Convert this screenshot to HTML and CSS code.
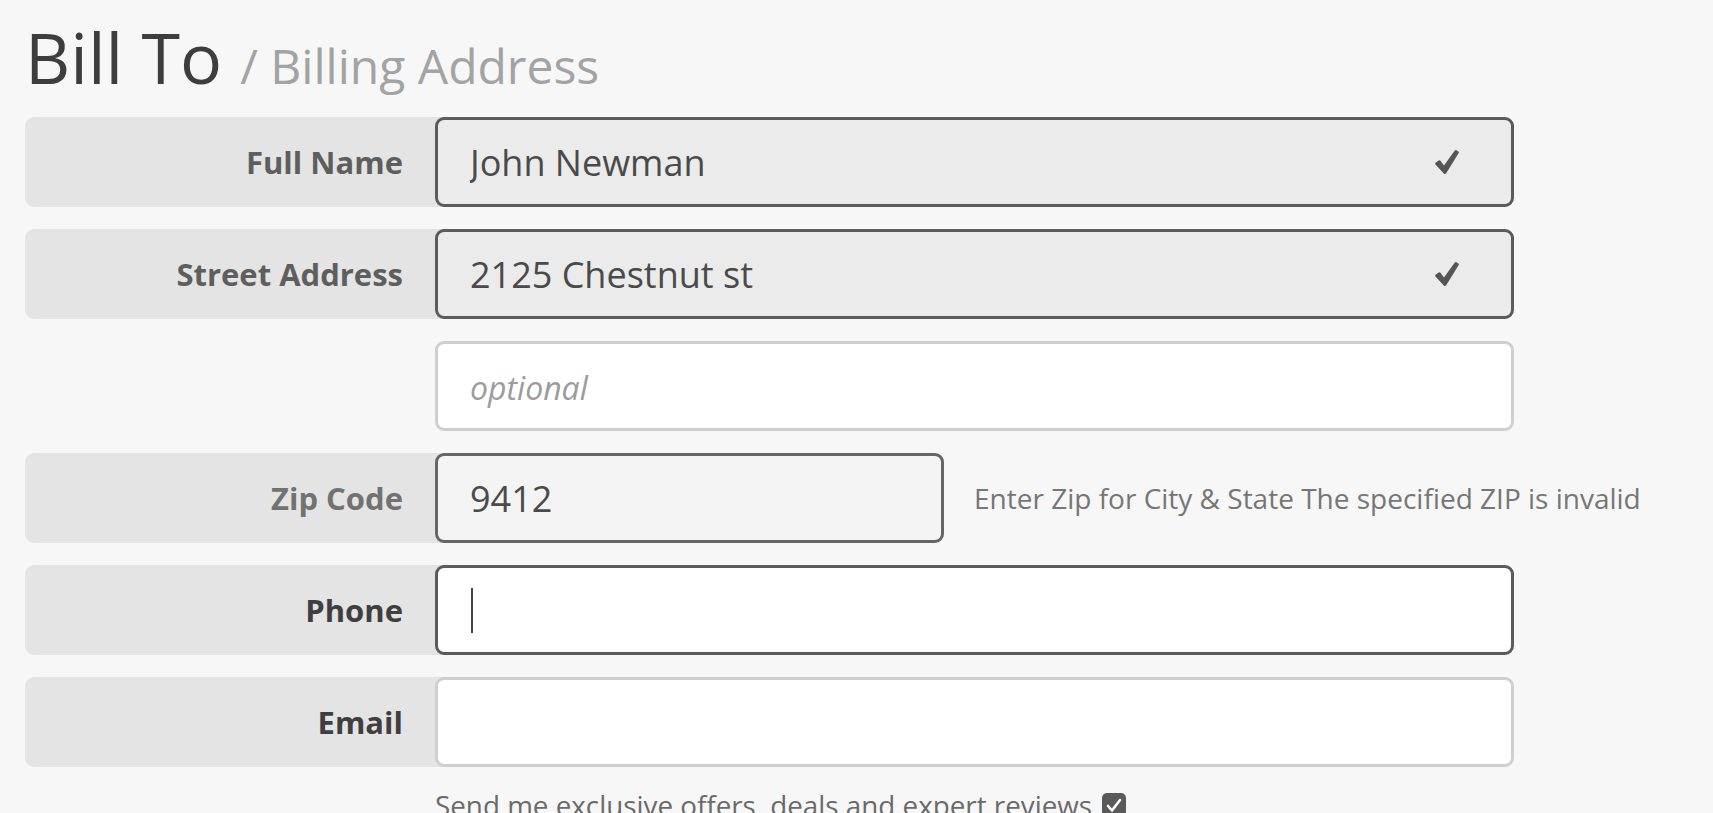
FILE: index.html
```html
<!DOCTYPE html>
<html lang="en">
<head>
<meta charset="utf-8">
<title>Bill To / Billing Address</title>
<link rel="stylesheet" href="styles.css">
</head>
<body>
<main class="page">
  <h1 class="title">Bill To <span class="subtitle">/ Billing Address</span></h1>
  <form class="form">
    <div class="row">
      <label class="label label-done">Full Name</label>
      <div class="field field-done">
        <input class="input" type="text" value="John Newman">
        <svg class="check" viewBox="0 0 28 28" aria-hidden="true"><path d="M2.2 16.2 Q2 15.2 2.8 14.6 L5.6 12.4 Q6.5 11.8 7.2 12.6 L11 17.6 L21.8 2.6 Q22.6 1.6 23.6 2.2 L25.4 3.4 Q26.2 4 25.7 4.9 L13.2 25.2 Q12.2 26.6 10.8 25.4 Z" fill="#555"/></svg>
      </div>
    </div>
    <div class="row">
      <label class="label label-done">Street Address</label>
      <div class="field field-done">
        <input class="input" type="text" value="2125 Chestnut st">
        <svg class="check" viewBox="0 0 28 28" aria-hidden="true"><path d="M2.2 16.2 Q2 15.2 2.8 14.6 L5.6 12.4 Q6.5 11.8 7.2 12.6 L11 17.6 L21.8 2.6 Q22.6 1.6 23.6 2.2 L25.4 3.4 Q26.2 4 25.7 4.9 L13.2 25.2 Q12.2 26.6 10.8 25.4 Z" fill="#555"/></svg>
      </div>
    </div>
    <div class="row">
      <div class="spacer"></div>
      <div class="field field-empty">
        <input class="input" type="text" placeholder="optional">
      </div>
    </div>
    <div class="row">
      <label class="label label-error">Zip Code</label>
      <div class="field field-zip">
        <input class="input" type="text" value="9412">
      </div>
      <p class="help">Enter Zip for City &amp; State The specified ZIP is invalid</p>
    </div>
    <div class="row">
      <label class="label label-active">Phone</label>
      <div class="field field-focus">
        <span class="caret"></span>
        <input class="input" type="tel" value="">
      </div>
    </div>
    <div class="row">
      <label class="label label-active">Email</label>
      <div class="field field-empty">
        <input class="input" type="email" value="">
      </div>
    </div>
    <div class="optin">
      <span class="optin-text">Send me exclusive offers, deals and expert reviews</span>
      <span class="box"><svg viewBox="0 0 24 24" aria-hidden="true"><path d="M6 13 L10 17.5 L18 7" fill="none" stroke="#fff" stroke-width="2.6" stroke-linecap="round" stroke-linejoin="round"/></svg></span>
    </div>
  </form>
</main>
</body>
</html>
```

FILE: styles.css
```css
* { box-sizing: border-box; }

html, body {
  margin: 0;
  padding: 0;
  background: #f7f7f7;
  font-family: "Open Sans", "Noto Sans", sans-serif;
  overflow: hidden;
}

.page {
  padding: 21px 0 0 25px;
}

.title {
  margin: 0 0 24px 0;
  font-size: 70px;
  line-height: 72px;
  font-weight: 400;
  color: #3d3d3d;
  white-space: nowrap;
}

.subtitle {
  font-size: 48px;
  line-height: 1;
  color: #a3a3a3;
}

.form {
  display: flex;
  flex-direction: column;
  gap: 22px;
}

.row {
  display: flex;
  align-items: center;
  height: 90px;
}

.label,
.spacer {
  flex: 0 0 420px;
  margin-right: -10px;
  height: 90px;
  display: flex;
  align-items: center;
  justify-content: flex-end;
  padding-right: 42px;
  font-size: 31px;
  font-weight: 700;
}

.label {
  background: #e4e4e4;
  border-radius: 9px 0 0 9px;
}

.label-done { color: #5e5e5e; }
.label-error { color: #727272; }
.label-active { color: #3f3f3f; }

.field {
  flex: 0 0 1079px;
  min-width: 0;
  height: 90px;
  display: flex;
  align-items: center;
  border: 3px solid #5b5b5b;
  border-radius: 9px;
  padding: 0 50px 0 32px;
  background: #fff;
}

.field-done { background: #ebebeb; }
.field-zip { flex-basis: 509px; background: #f4f4f4; border-color: #666; }
.field-focus { background: #fff; }
.field-empty { border-color: #cfcfcf; background: #fff; }

.input {
  flex: 1 1 0;
  width: 0;
  min-width: 0;
  border: 0;
  outline: 0;
  padding: 0;
  margin: 0;
  background: transparent;
  font-family: inherit;
  font-size: 36px;
  color: #4a4a4a;
}

.input::placeholder {
  font-style: italic;
  font-size: 32px;
  color: #9c9c9c;
}

.check {
  flex: 0 0 28px;
  width: 28px;
  height: 28px;
}

.caret {
  flex: 0 0 2px;
  width: 2px;
  height: 45px;
  background: #444;
  margin-left: 1px;
}

.help {
  margin: 0 0 0 30px;
  font-size: 28px;
  color: #767676;
  white-space: nowrap;
}

.optin {
  display: flex;
  align-items: center;
  gap: 10px;
  margin: -3px 0 0 410px;
  font-size: 27.8px;
  color: #6a6a6a;
  white-space: nowrap;
}

.box {
  width: 24px;
  height: 24px;
  border-radius: 5px;
  background: #5a5a5a;
  display: inline-flex;
}

.box svg { width: 24px; height: 24px; }
```
